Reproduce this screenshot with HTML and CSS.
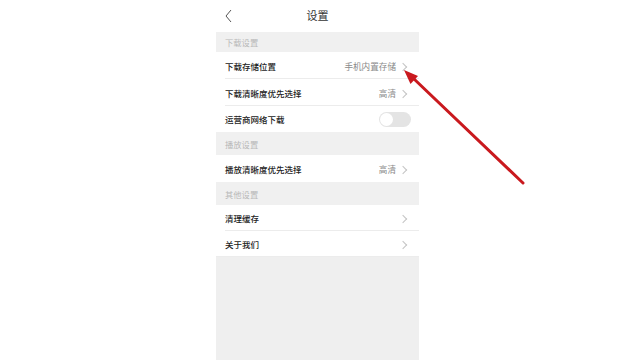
FILE: index.html
```html
<!DOCTYPE html>
<html lang="zh">
<head>
<meta charset="utf-8">
<link rel="stylesheet" href="styles.css">
</head>
<body>
<div class="stage">
  <div class="phone">
    <div class="topbar">
      <svg class="back" width="9" height="14" viewBox="0 0 9 14"><path d="M7 1 L2 7 L7 13" fill="none" stroke="#555" stroke-width="1"/></svg>
      <div class="title">设置</div>
    </div>
    <div class="sec first">下载设置</div>
    <div class="row"><span class="label">下载存储位置</span><span class="right"><span class="val">手机内置存储</span><span class="chev"></span></span></div>
    <div class="row"><span class="label">下载清晰度优先选择</span><span class="right"><span class="val">高清</span><span class="chev"></span></span></div>
    <div class="row short nob"><span class="label">运营商网络下载</span><span class="toggle"><span class="knob"></span></span></div>
    <div class="sec">播放设置</div>
    <div class="row nob"><span class="label">播放清晰度优先选择</span><span class="right"><span class="val">高清</span><span class="chev"></span></span></div>
    <div class="sec">其他设置</div>
    <div class="row short"><span class="label">清理缓存</span><span class="right"><span class="chev"></span></span></div>
    <div class="row short last"><span class="label">关于我们</span><span class="right"><span class="chev"></span></span></div>
    <div class="rest"></div>
  </div>
</div>
<svg class="arrow" width="640" height="360" viewBox="0 0 640 360">
  <line x1="523" y1="183" x2="413" y2="78" stroke="#c9191e" stroke-width="3" stroke-linecap="round"/>
  <polygon points="404,70 418,76 410.5,84" fill="#c9191e"/>
</svg>
</body>
</html>
```
FILE: styles.css
```css
html, body {
  margin: 0;
  padding: 0;
  background: #fff;
  width: 640px;
  height: 360px;
  overflow: hidden;
  font-family: "Noto Sans CJK SC", "Noto Sans", sans-serif;
}
.stage {
  padding-left: 216px;
  height: 360px;
}
.phone {
  width: 203px;
  height: 360px;
  display: flex;
  flex-direction: column;
  background: #fff;
}
.topbar {
  height: 32px;
  display: flex;
  align-items: center;
  justify-content: center;
  position: relative;
}
.back {
  position: absolute;
  left: 8px;
  top: 9px;
}
.title {
  font-size: 11px;
  color: #333;
  line-height: 1;
  margin-top: -2px;
}
.sec {
  height: 23px;
  background: #f0f0f0;
  color: #b8b8b8;
  font-size: 8.3px;
  display: flex;
  align-items: center;
  padding-left: 9px;
}
.sec.first {
  height: 20px;
}
.row {
  height: 27px;
  display: flex;
  align-items: center;
  justify-content: space-between;
  padding: 0 8px 0 9px;
  position: relative;
  box-sizing: border-box;
}
.row::after {
  content: "";
  position: absolute;
  left: 9px;
  right: 0;
  bottom: 0;
  height: 1px;
  background: #ececec;
}
.row.last::after {
  left: 0;
}
.row.short {
  height: 26px;
}
.row.nob::after {
  display: none;
}
.label {
  font-size: 8.5px;
  color: #222;
  font-weight: 500;
}
.right {
  display: flex;
  align-items: center;
  gap: 4px;
}
.val {
  font-size: 8.6px;
  color: #8a8a8a;
}
.chev {
  width: 5px;
  height: 5px;
  border-top: 1px solid #c4c4c4;
  border-right: 1px solid #c4c4c4;
  transform: rotate(45deg);
  margin-right: 5px;
  margin-top: 2px;
}
.toggle {
  width: 32px;
  height: 15px;
  border-radius: 8px;
  background: #e4e4e4;
  display: flex;
  align-items: center;
  padding: 0 1px;
  box-sizing: border-box;
}
.knob {
  width: 13px;
  height: 13px;
  border-radius: 50%;
  background: #fff;
}
.rest {
  flex: 1;
  background: #efefef;
}
.arrow {
  position: absolute;
  left: 0;
  top: 0;
}
```
